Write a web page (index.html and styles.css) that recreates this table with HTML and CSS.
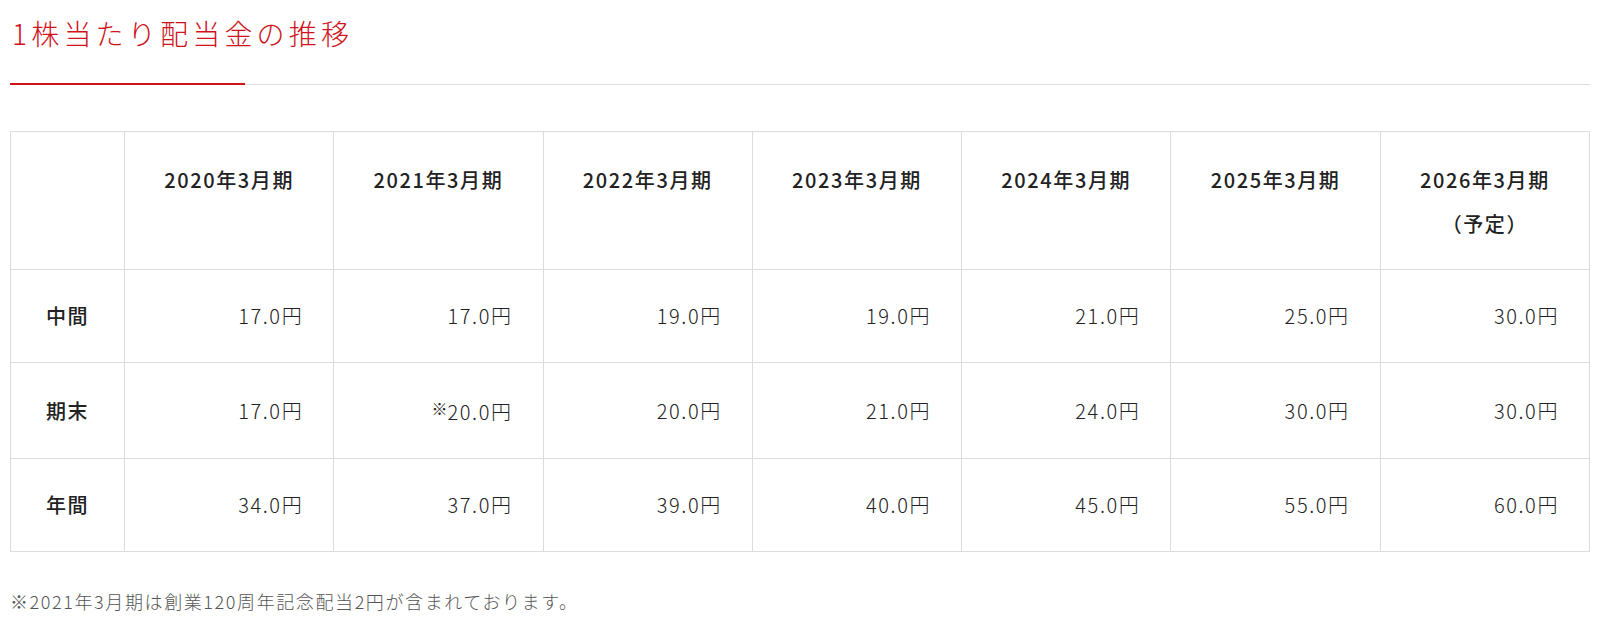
FILE: index.html
```html
<!DOCTYPE html>
<html lang="ja">
<head>
<meta charset="utf-8">
<title>1株当たり配当金の推移</title>
<link rel="stylesheet" href="styles.css">
</head>
<body>
<section class="dividend">
  <h2 class="dividend__title">1株当たり配当金の推移</h2>
  <table class="dividend__table">
    <colgroup>
      <col class="col-label">
      <col><col><col><col><col><col><col>
    </colgroup>
    <thead>
      <tr>
        <th class="corner"></th>
        <th>2020年3月期</th>
        <th>2021年3月期</th>
        <th>2022年3月期</th>
        <th>2023年3月期</th>
        <th>2024年3月期</th>
        <th>2025年3月期</th>
        <th>2026年3月期<br>（予定）</th>
      </tr>
    </thead>
    <tbody>
      <tr>
        <th>中間</th>
        <td>17.0円</td><td>17.0円</td><td>19.0円</td><td>19.0円</td><td>21.0円</td><td>25.0円</td><td>30.0円</td>
      </tr>
      <tr>
        <th>期末</th>
        <td>17.0円</td><td><sup class="note-mark">※</sup>20.0円</td><td>20.0円</td><td>21.0円</td><td>24.0円</td><td>30.0円</td><td>30.0円</td>
      </tr>
      <tr>
        <th>年間</th>
        <td>34.0円</td><td>37.0円</td><td>39.0円</td><td>40.0円</td><td>45.0円</td><td>55.0円</td><td>60.0円</td>
      </tr>
    </tbody>
  </table>
  <p class="dividend__note">※2021年3月期は創業120周年記念配当2円が含まれております。</p>
</section>
</body>
</html>
```

FILE: styles.css
```css
html, body {
  margin: 0;
  padding: 0;
  background: #fff;
}

body {
  font-family: "Noto Sans CJK JP", "Noto Sans", sans-serif;
  color: #222;
  letter-spacing: 0.1em;
}

.dividend {
  padding: 0 10px;
}

.dividend__title {
  position: relative;
  margin: 0;
  padding: 12px 0 30px 2px;
  font-size: 28px;
  line-height: 42px;
  font-weight: 300;
  letter-spacing: 0.15em;
  color: #d0121b;
  border-bottom: 1px solid #dddddd;
}

.dividend__title::after {
  content: "";
  position: absolute;
  left: 0;
  bottom: -1px;
  width: 235px;
  height: 2px;
  background: #d0121b;
}

.dividend__table {
  width: 100%;
  margin-top: 46px;
  border-collapse: collapse;
  table-layout: fixed;
}

.col-label {
  width: 114px;
}

.dividend__table th,
.dividend__table td {
  border: 1px solid #dcdcdc;
}

.dividend__table thead th {
  padding: 26px 10px 23px;
  font-size: 20px;
  line-height: 44px;
  font-weight: 500;
  text-align: center;
  vertical-align: top;
}

.dividend__table tbody th {
  padding: 28px 10px 29px;
  font-size: 20px;
  line-height: 35px;
  font-weight: 500;
  text-align: center;
}

.dividend__table tbody td {
  padding: 28px 30px 29px;
  font-size: 20px;
  line-height: 35px;
  font-weight: 300;
  text-align: right;
}

.note-mark {
  font-size: 16px;
  line-height: 35px;
  vertical-align: 5px;
  letter-spacing: 0;
}

.dividend__note {
  margin: 34px 0 0;
  font-size: 18px;
  line-height: 30px;
  font-weight: 300;
  color: #555;
}
```
